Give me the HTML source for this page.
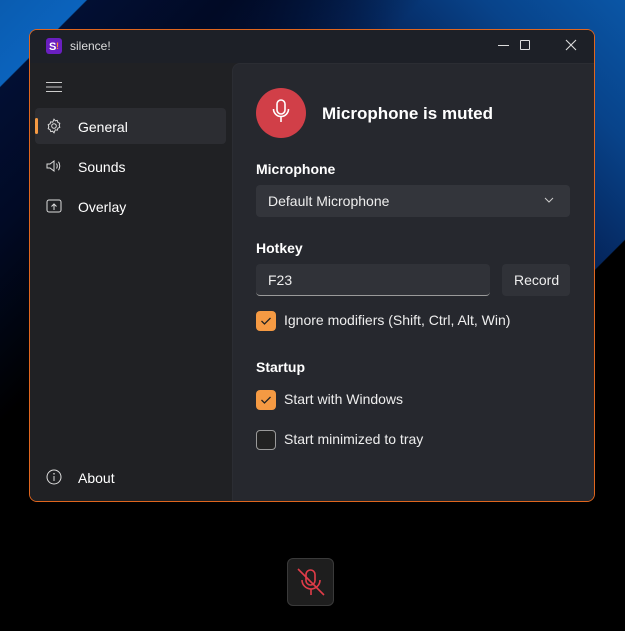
<!DOCTYPE html>
<html><head><meta charset="utf-8"><style>
*{margin:0;padding:0;box-sizing:border-box}
body{width:625px;height:631px;overflow:hidden;background:#000;font-family:"Segoe UI","Liberation Sans",sans-serif;color:#fff;position:relative}
.bg{position:absolute;left:0;top:0;width:625px;height:631px}
.bg1{background:linear-gradient(135deg,#0a5cb0 0px,#0b63bd 61px,#020f33 62px,#010a25 160px,rgba(0,0,0,0) 300px)}
.bg2{background:linear-gradient(225deg,#0a56a6 0px,#08438a 100px,#05275e 200px,#02123a 300px,rgba(0,0,0,0) 420px)}
.bg3{background:linear-gradient(135deg,rgba(0,0,0,0) 611px,#000 612px)}
.win{position:absolute;left:29px;top:29px;width:566px;height:473px;border:1px solid #e0661e;border-radius:8px;background:#202124;overflow:hidden}
.title{position:absolute;left:0;top:0;width:100%;height:33px;background:#1d2027}
.side{position:absolute;left:0;top:33px;width:202px;bottom:0;background:#202124}
.content{position:absolute;left:202px;top:33px;right:0;bottom:0;background:#26282e;border-top-left-radius:8px;border-top:1px solid #2b2d33;border-left:1px solid #2b2d33}
.t{position:absolute;white-space:nowrap}
.nav{position:absolute;left:5px;width:191px;height:36px;font-size:14px}
.nav span{position:absolute;left:43px;top:11px}
.nav svg{position:absolute;left:11px;top:10px}
.box{position:absolute;border-radius:4px}
.cb{position:absolute;width:20px;height:20px;border-radius:4px;background:#f59a43}
.cb svg{position:absolute;left:4px;top:5px}
.lbl{font-size:14px;font-weight:bold}
</style></head><body>
<div class="bg bg2"></div><div class="bg bg1"></div><div class="bg bg3"></div>
<div class="win">
 <div class="title">
  <svg style="position:absolute;left:16px;top:8px" width="16" height="16" viewBox="0 0 16 16"><rect width="16" height="16" rx="3" fill="#6a1fc0"/><text x="3" y="12" font-size="11" font-weight="bold" fill="#fff" font-family="Liberation Sans">S</text><text x="10" y="11" font-size="9" font-weight="bold" fill="#ff8a30" font-family="Liberation Sans">!</text></svg>
  <div class="t" style="left:40px;top:9px;font-size:12px;color:#ddd">silence!</div>
  <div style="position:absolute;left:468px;top:15px;width:11px;height:1px;background:#ddd"></div>
  <div style="position:absolute;left:490px;top:10px;width:10px;height:10px;border:1px solid #ddd;border-radius:1px"></div>
  <svg style="position:absolute;left:535px;top:9px" width="12" height="12" viewBox="0 0 12 12"><path d="M1 1L11 11M11 1L1 11" stroke="#ddd" stroke-width="1.1"/></svg>
 </div>
 <div class="side">
  <svg style="position:absolute;left:16px;top:18px" width="16" height="12"><path d="M0 1.5H16M0 6H16M0 10.5H16" stroke="#ccc" stroke-width="1"/></svg>
  <div class="nav" style="top:45px;background:#2c2d32;border-radius:4px"><div style="position:absolute;left:0;top:10px;width:3px;height:16px;border-radius:2px;background:#f59a43"></div>
   <svg width="16" height="16" viewBox="0 0 16 16"><circle cx="8" cy="8" r="2.3" fill="none" stroke="#ddd"/><path d="M8 1.2l1.3 1.6 2-.4.6 2 1.9.9-.6 2 .6 2-1.9.9-.6 2-2-.4L8 14.8l-1.3-1.6-2 .4-.6-2-1.9-.9.6-2-.6-2 1.9-.9.6-2 2 .4z" fill="none" stroke="#ddd"/></svg><span>General</span></div>
  <div class="nav" style="top:85px"><svg width="16" height="16" viewBox="0 0 16 16"><path d="M1 6H4L8 3V13L4 10H1Z" fill="none" stroke="#ddd"/><path d="M10.5 5.5Q12 8 10.5 10.5M12.5 3.8Q15 8 12.5 12.2" fill="none" stroke="#ddd"/></svg><span>Sounds</span></div>
  <div class="nav" style="top:125px"><svg width="16" height="16" viewBox="0 0 16 16"><rect x="1" y="2" width="14" height="12" rx="2" fill="none" stroke="#ddd"/><path d="M8 12V6M5.5 8.5L8 6L10.5 8.5" fill="none" stroke="#ddd"/></svg><span>Overlay</span></div>
  <div class="nav" style="top:396px"><svg width="16" height="16" viewBox="0 0 16 16"><circle cx="8" cy="8" r="7" fill="none" stroke="#ddd"/><path d="M8 7V12" stroke="#ddd"/><circle cx="8" cy="4.8" r=".8" fill="#ddd"/></svg><span>About</span></div>
 </div>
 <div class="content">
  <div style="position:absolute;left:23px;top:24px;width:50px;height:50px;border-radius:50%;background:#d13f48"></div>
  <svg style="position:absolute;left:38px;top:34px" width="20" height="26" viewBox="0 0 20 26"><rect x="6" y="2" width="8" height="14" rx="4" fill="none" stroke="#fff" stroke-width="1.6"/><path d="M2.5 11a7.5 7.5 0 0 0 15 0M10 18.5V24" fill="none" stroke="#fff" stroke-width="1.6"/></svg>
  <div class="t" style="left:89px;top:40px;font-size:17px;font-weight:bold">Microphone is muted</div>
  <div class="t lbl" style="left:23px;top:97px">Microphone</div>
  <div class="box" style="left:23px;top:121px;width:314px;height:32px;background:#33353b"></div>
  <div class="t" style="left:35px;top:129px;font-size:14px;color:#eee">Default Microphone</div>
  <svg style="position:absolute;left:311px;top:133px" width="10" height="6"><path d="M1 1L5 5L9 1" fill="none" stroke="#ccc"/></svg>
  <div class="t lbl" style="left:23px;top:176px">Hotkey</div>
  <div class="box" style="left:23px;top:200px;width:234px;height:32px;background:#303238;border-bottom:1px solid #9a9a9a"></div>
  <div class="t" style="left:35px;top:208px;font-size:14px;color:#eee">F23</div>
  <div class="box" style="left:269px;top:200px;width:68px;height:32px;background:#303238"></div>
  <div class="t" style="left:281px;top:208px;font-size:14px;color:#eee">Record</div>
  <div class="cb" style="left:23px;top:247px"><svg width="12" height="10"><path d="M1.5 5L4.5 8L10.5 2" fill="none" stroke="#222" stroke-width="1.3"/></svg></div>
  <div class="t" style="left:51px;top:248px;font-size:14px;color:#eee">Ignore modifiers (Shift, Ctrl, Alt, Win)</div>
  <div class="t lbl" style="left:23px;top:295px">Startup</div>
  <div class="cb" style="left:23px;top:326px"><svg width="12" height="10"><path d="M1.5 5L4.5 8L10.5 2" fill="none" stroke="#222" stroke-width="1.3"/></svg></div>
  <div class="t" style="left:51px;top:327px;font-size:14px;color:#eee">Start with Windows</div>
  <div style="position:absolute;left:23px;top:366px;width:20px;height:20px;border-radius:4px;border:1px solid #9a9a9a;background:#222"></div>
  <div class="t" style="left:51px;top:367px;font-size:14px;color:#eee">Start minimized to tray</div>
 </div>
</div>
<div style="position:absolute;left:287px;top:558px;width:47px;height:48px;border-radius:6px;background:#1e1e1e;border:1px solid #3a3a3a"></div>
<svg style="position:absolute;left:296px;top:567px" width="30" height="30" viewBox="0 0 30 30"><rect x="10" y="3" width="9" height="15" rx="4.5" fill="none" stroke="#e03c48" stroke-width="1.6"/><path d="M6 13a9 9 0 0 0 18 0M15 22V28M2 2L28 28" fill="none" stroke="#e03c48" stroke-width="1.6"/></svg>
</body></html>
